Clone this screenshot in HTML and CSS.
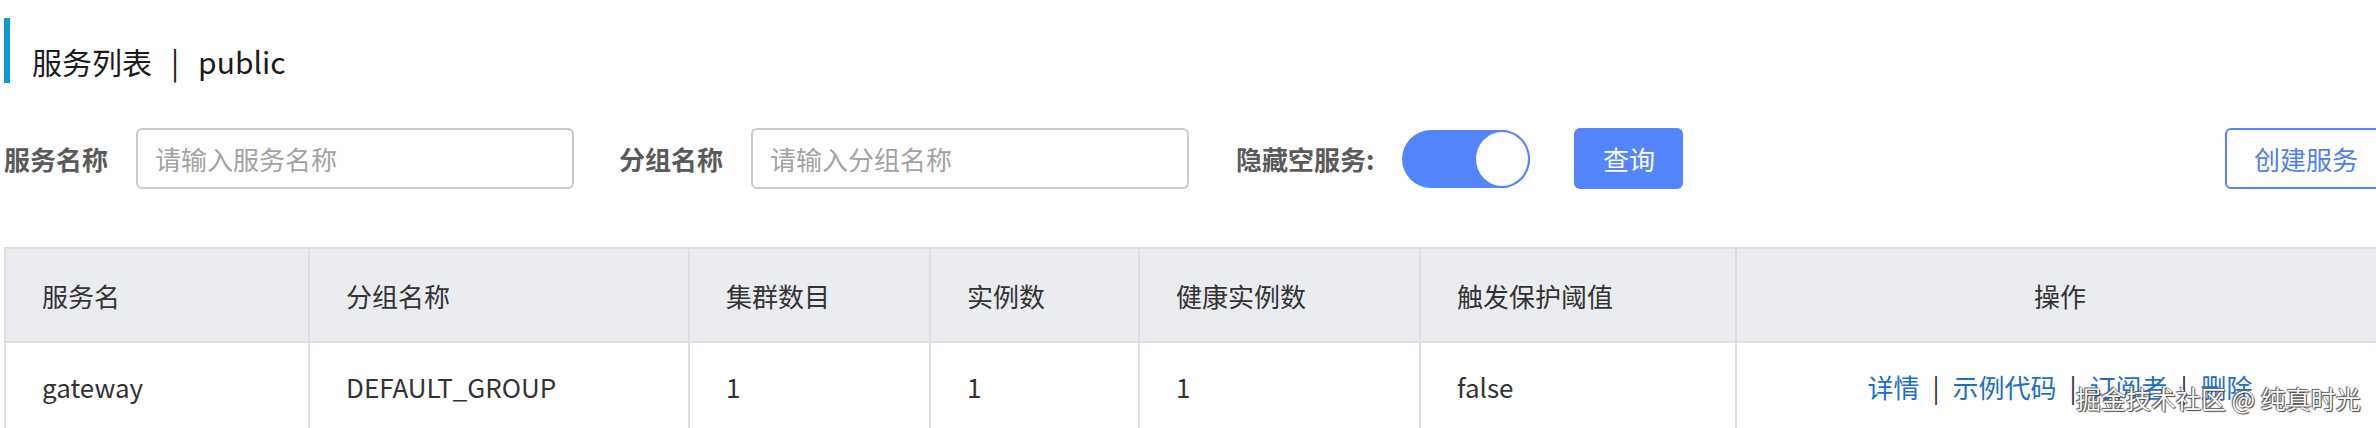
FILE: index.html
```html
<!DOCTYPE html>
<html lang="zh-CN">
<head>
  <meta charset="UTF-8" />
  <title>服务列表</title>
  <link rel="stylesheet" href="styles.css">
</head>
<body>
  <div class="page">

    <!-- Page title -->
    <h2 class="page-title">
      <span>服务列表</span>
      <span class="title-sep">|</span>
      <span>public</span>
    </h2>

    <!-- Search bar -->
    <form class="filter-bar">
      <label class="filter-label" for="service-name">服务名称</label>
      <input class="filter-input" type="text" id="service-name" placeholder="请输入服务名称" />

      <label class="filter-label label-group" for="group-name">分组名称</label>
      <input class="filter-input" type="text" id="group-name" placeholder="请输入分组名称" />

      <span class="filter-label label-hide">隐藏空服务:</span>
      <span class="switch"><span class="switch-knob"></span></span>

      <button type="button" class="btn btn-primary">查询</button>
      <button type="button" class="btn btn-outline">创建服务</button>
    </form>

    <!-- Service table -->
    <table class="service-table">
      <colgroup>
        <col style="width: 304px">
        <col style="width: 380px">
        <col style="width: 241px">
        <col style="width: 209px">
        <col style="width: 281px">
        <col style="width: 316px">
        <col style="width: 648px">
      </colgroup>
      <thead>
        <tr>
          <th>服务名</th>
          <th>分组名称</th>
          <th>集群数目</th>
          <th>实例数</th>
          <th>健康实例数</th>
          <th>触发保护阈值</th>
          <th class="col-actions">操作</th>
        </tr>
      </thead>
      <tbody>
        <tr>
          <td>gateway</td>
          <td>DEFAULT_GROUP</td>
          <td>1</td>
          <td>1</td>
          <td>1</td>
          <td>false</td>
          <td class="col-actions">
            <a href="#">详情</a><span class="link-sep">|</span><a href="#">示例代码</a><span class="link-sep">|</span><a href="#">订阅者</a><span class="link-sep">|</span><a href="#">删除</a>
          </td>
        </tr>
      </tbody>
    </table>

  </div>

  <div class="watermark">掘金技术社区 @ 纯真时光</div>
</body>
</html>
```

FILE: styles.css
```css
/* Reset and base styling */
* {
  margin: 0;
  padding: 0;
  box-sizing: border-box;
  font-family: "Noto Sans CJK SC", "Noto Sans", sans-serif;
}

body {
  background: #fff;
  color: #333;
  overflow: hidden;
}

.page {
  width: 2390px;
  padding-left: 4px;
}

/* Title */
.page-title {
  margin-top: 18px;
  height: 65px;
  border-left: 6px solid #0c9bd0;
  padding-left: 22px;
  padding-top: 20px;
  display: flex;
  align-items: center;
  font-size: 30px;
  font-weight: 400;
  color: #1a1a1a;
}

.title-sep {
  margin: 0 19px;
}

/* Search bar */
.filter-bar {
  margin-top: 45px;
  height: 61px;
  width: 2383px;
  display: flex;
  align-items: center;
}

.filter-label {
  font-size: 26px;
  font-weight: 700;
  color: #5a5a5a;
  margin-right: 28px;
}

.label-group {
  margin-left: 45px;
}

.label-hide {
  margin-left: 47px;
}

.filter-input {
  width: 438px;
  height: 61px;
  border: 2px solid #c8c9cc;
  border-radius: 6px;
  padding-left: 17px;
  font-size: 26px;
  color: #333;
  outline: none;
}

.filter-input::placeholder {
  color: #a3a3a3;
}

/* Toggle */
.switch {
  width: 128px;
  height: 58px;
  border-radius: 29px;
  background: #5584ff;
  display: flex;
  justify-content: flex-end;
}

.switch-knob {
  width: 56px;
  height: 58px;
  border-radius: 50%;
  background: #fff;
  border: 2px solid #5584ff;
}

/* Buttons */
.btn {
  height: 61px;
  font-size: 26px;
  border-radius: 6px;
  cursor: pointer;
}

.btn-primary {
  margin-left: 44px;
  width: 109px;
  background: #5584ff;
  color: #fff;
  border: none;
}

.btn-outline {
  margin-left: auto;
  width: 162px;
  background: #fff;
  color: #4f7ff0;
  border: 2px solid #5584ff;
  text-align: left;
  padding-left: 27px;
}

/* Table */
.service-table {
  margin-top: 58px;
  width: 2379px;
  table-layout: fixed;
  border-collapse: collapse;
  border: 2px solid #dcdee3;
}

.service-table th,
.service-table td {
  height: 94px;
  padding-left: 36px;
  text-align: left;
  font-size: 26px;
  font-weight: 400;
  color: #333;
  border: 2px solid #dcdee3;
  white-space: nowrap;
}

.service-table th {
  background: #ebecf0;
}

.service-table td {
  border-bottom: none;
  padding-bottom: 5px;
}

.service-table .col-actions {
  text-align: center;
  padding-left: 0;
}

.col-actions a {
  color: #1d6fc6;
  text-decoration: none;
}

.link-sep {
  margin: 0 13px;
  color: #333;
}

/* Watermark */
.watermark {
  position: absolute;
  left: 2076px;
  top: 380px;
  font-size: 25px;
  color: #fafafa;
  white-space: nowrap;
  text-shadow: 0 0 1px #333, 1px 1px 1px #444, -1px -1px 1px #666;
}
```
